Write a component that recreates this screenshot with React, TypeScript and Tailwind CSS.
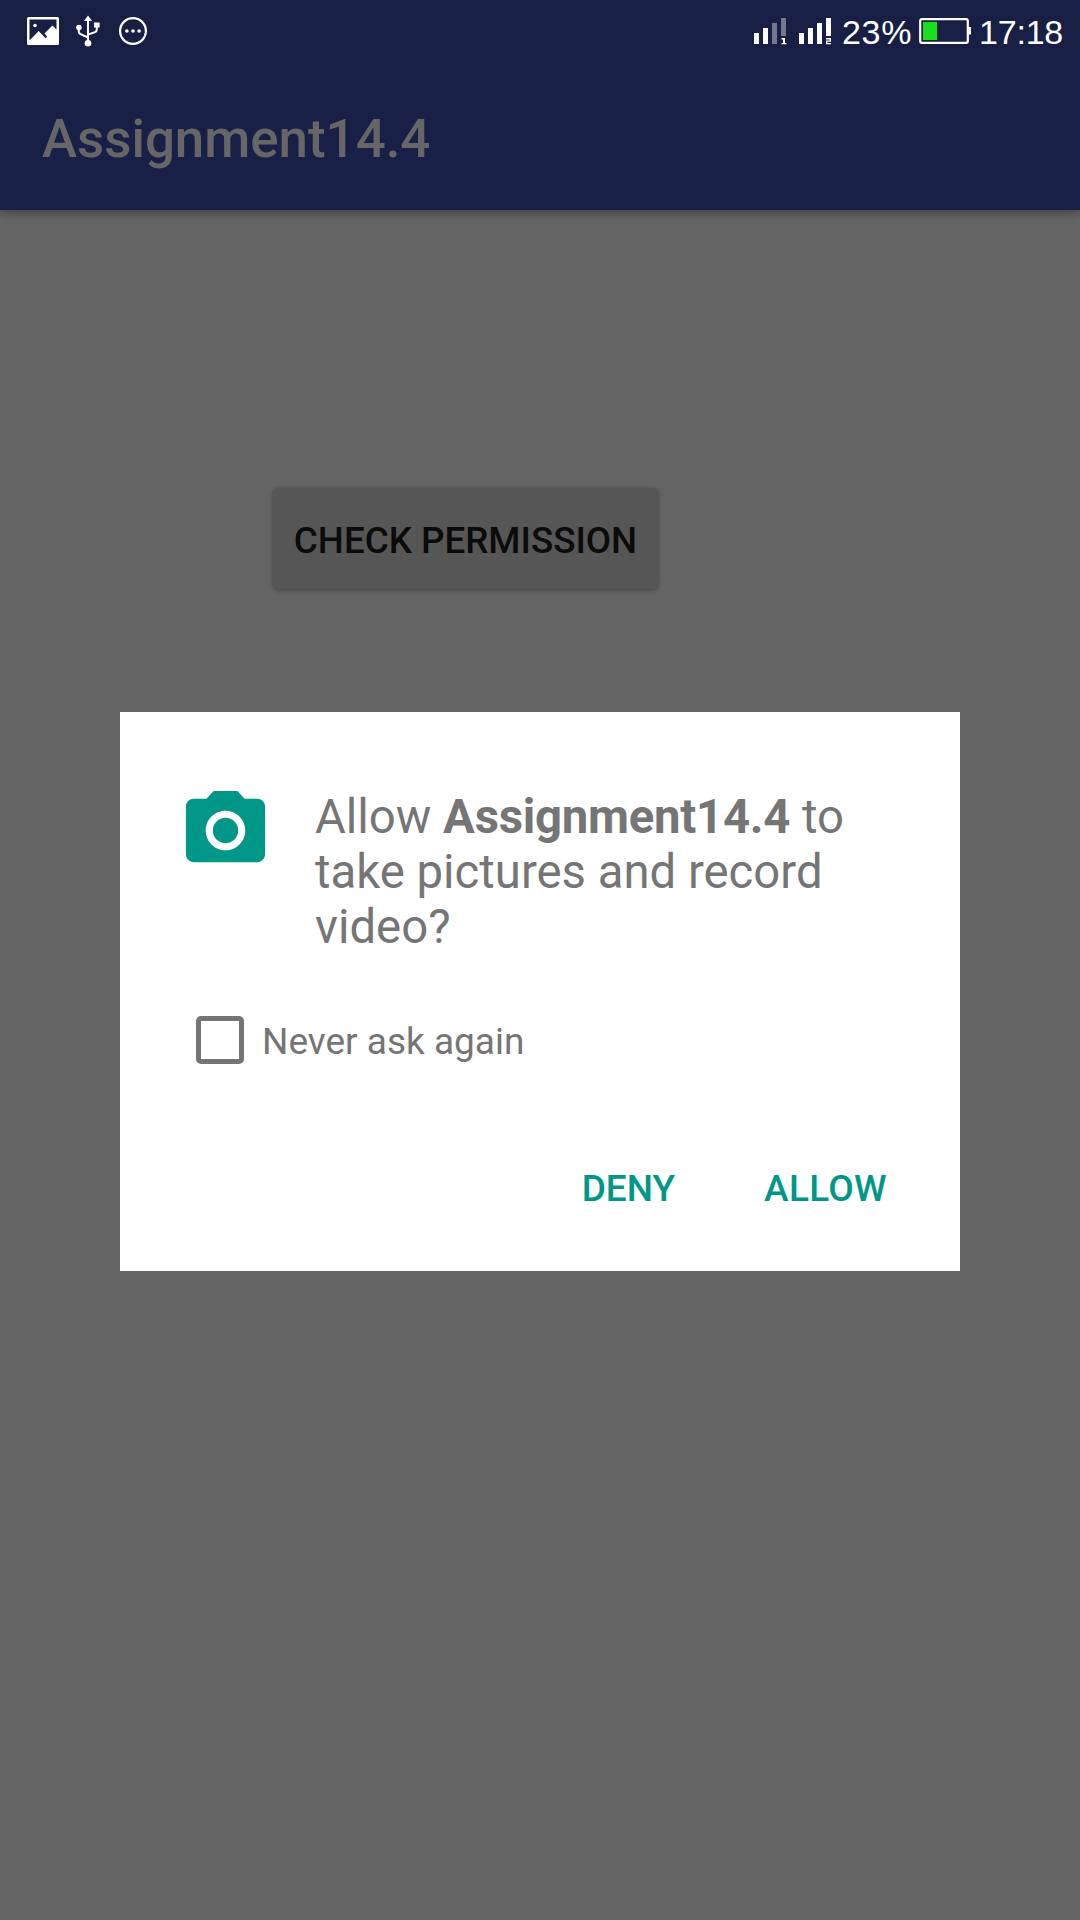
import React from "react";

function StatusBar() {
  return (
    <div className="flex h-[63px] items-center justify-between bg-[#171f44] text-white">
      <div className="flex h-full items-start">
        <svg className="ml-[27px] mt-[17px] h-[28px] w-[32px]" viewBox="0 0 32 28">
          <path
            fill="#fff"
            fillRule="evenodd"
            d="M1.500 0h29A1.500 1.500 0 0 1 32 1.500v25a1.500 1.500 0 0 1-1.500 1.500h-29A1.500 1.500 0 0 1 0 26.500v-25A1.500 1.500 0 0 1 1.500 0zM2.500 2.500V23.500L11.700 14l6.800 7.200 1.600-1.700-2.700-3L25.500 8.500l4 4V2.500z"
          />
          <circle cx="8" cy="8.500" r="1.800" fill="#fff" />
        </svg>
        <svg className="ml-[17px] mt-[15px] h-[32px] w-[24px]" viewBox="0 0 24 32">
          <g fill="none" stroke="#fff" strokeWidth="2">
            <path d="M12 4v24M2.800 12v4.500q0 1.800 1.800 2.600L12 22.500M20.800 10v4.500q0 1.800-1.800 2.600L12 19.500" />
          </g>
          <g fill="#fff">
            <path d="M12 .5 16 6H8z" />
            <circle cx="2.900" cy="12.500" r="2.800" />
            <path d="M18 7.500h5.600v5H18z" />
            <circle cx="12" cy="28.200" r="3.300" />
          </g>
        </svg>
        <svg className="ml-[19px] mt-[17px] h-[28px] w-[28px]" viewBox="0 0 28 28">
          <circle cx="14" cy="14" r="12.900" fill="none" stroke="#fff" strokeWidth="2.200" />
          <g fill="#fff">
            <circle cx="7.900" cy="14" r="1.800" />
            <circle cx="14" cy="14" r="1.800" />
            <circle cx="20.100" cy="14" r="1.800" />
          </g>
        </svg>
      </div>
      <div className="flex h-full items-start font-['Liberation_Sans',Arial,sans-serif] text-[34px] leading-[38px]">
        <svg className="mt-[17px] h-[28px] w-[78px]" viewBox="0 0 78 28">
          <g fill="#fff">
            <path d="M0 16h5v11H0zM9 11h5v16H9z" />
            <path d="M18 6h5v21h-5zM27 1h5v18h-5z" opacity=".4" />
            <path d="M28 21h3v5h1.500v1.300H27.500V26H29v-3.500h-1.500V21z" />
            <path d="M45 16h5v11h-5zM54 11h5v16h-5zM63 6h5v21h-5zM72 1h5v18h-5z" />
            <path d="M72 21h5v3.800h-3.500V26H77v1.300h-5V23.600h3.500v-1.200H72z" />
          </g>
        </svg>
        <span className="ml-[9px] mt-[13px] w-[78px] pl-px tracking-[0.7px]">23%</span>
        <svg className="mt-[18px] h-[26px] w-[53px]" viewBox="0 0 53 26">
          <rect x="1.200" y="1.200" width="47.600" height="23.600" rx="1.800" fill="none" stroke="#fff" strokeWidth="2.200" />
          <path d="M49 9h3v7.500h-3z" fill="#fff" />
          <path d="M4 4h14v18H4z" fill="#18e01c" />
        </svg>
        <span className="ml-[6px] mt-[13px] w-[102px] pl-px tracking-[-0.2px]">17:18</span>
      </div>
    </div>
  );
}

function PermissionDialog() {
  return (
    <div className="absolute left-[120px] top-[712px] flex h-[559px] w-[840px] flex-col bg-white text-[#757575]">
      <div className="flex pl-[58px] pt-[71px]">
        <svg className="h-[95px] w-[95px] shrink-0" viewBox="0 0 24 24" fill="#009688">
          <circle cx="12" cy="12" r="3.200" />
          <path d="M9 2 7.170 4H4c-1.100 0-2 .9-2 2v12c0 1.100.9 2 2 2h16c1.100 0 2-.9 2-2V6c0-1.100-.9-2-2-2h-3.170L15 2H9zm3 15c-2.760 0-5-2.240-5-5s2.240-5 5-5 5 2.240 5 5-2.240 5-5 5z" />
        </svg>
        <p className="ml-[42px] mt-[7px] text-[47.300px] leading-[55px] whitespace-nowrap">
          Allow <b className="font-bold tracking-[-0.25px]">Assignment14.4</b> to
          <br />
          take pictures and record
          <br />
          video?
        </p>
      </div>
      <label className="ml-[76px] mt-[62px] flex h-[48px] items-center">
        <span className="mb-[2px] h-[48px] w-[48px] rounded-[5px] border-[5.500px] border-[#757575]" />
        <span className="ml-[18px] text-[37px] leading-[43px]">Never ask again</span>
      </label>
      <div className="mt-[102px] flex justify-end pr-[73px] text-[37px] leading-[43px] font-medium text-[#009688]">
        <button className="mr-[89px]">DENY</button>
        <button className="tracking-[0.3px]">ALLOW</button>
      </div>
    </div>
  );
}

export default function App() {
  return (
    <div className="relative h-[1920px] w-[1080px] overflow-hidden bg-[#646464] font-[Roboto,sans-serif]">
      <header className="shadow-[0_3px_9px_rgba(0,0,0,0.35)]">
        <StatusBar />
        <div className="flex h-[147px] items-center bg-[#192047] pl-[42px]">
          <h1 className="pt-[6px] text-[52.850px] font-medium text-[#666666]">Assignment14.4</h1>
        </div>
      </header>
      <main>
        <button className="ml-[273px] mt-[278px] flex h-[101px] w-[385px] items-center justify-center rounded-[5px] bg-[#565656] pt-[5px] text-[36.750px] font-medium text-[#0b0b0b] shadow-[0_2px_5px_rgba(0,0,0,0.22),0_0_3px_rgba(0,0,0,0.12)]">
          CHECK PERMISSION
        </button>
      </main>
      <PermissionDialog />
    </div>
  );
}
